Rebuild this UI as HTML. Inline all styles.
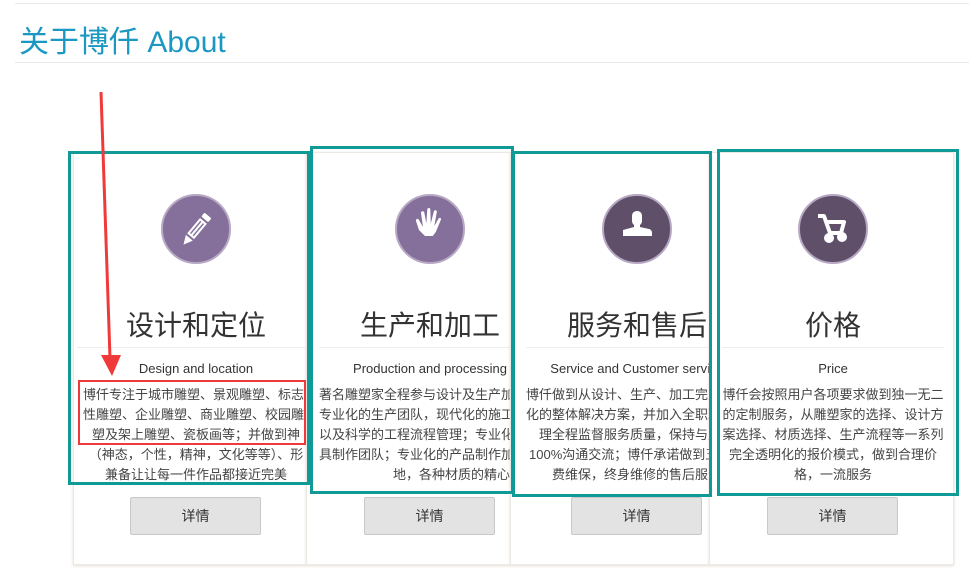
<!DOCTYPE html>
<html><head><meta charset="utf-8"><style>
*{margin:0;padding:0;box-sizing:border-box}
body{width:969px;height:584px;background:#fff;position:relative;overflow:hidden;font-family:"Liberation Sans","Noto Sans CJK SC",sans-serif;color:#333}
.abs{position:absolute}
.hl{position:absolute;left:15px;right:0;height:1px;background:#e8e8e8}
h1{position:absolute;left:19px;top:17px;font-size:30px;font-weight:normal;color:#1a98c2}
.card{position:absolute;top:152px;height:413px;background:#fff;border:1px solid #ece8e4;box-shadow:0 1px 3px #e5ded6;overflow:hidden}
.in{position:absolute;top:0;text-align:center}
.circ{position:absolute;top:41px;width:70px;height:70px;border-radius:50%;border:2px solid #b7a8c4}
.t{position:absolute;top:151px;left:0;right:0;font-size:28px;color:#333;white-space:nowrap}
.hr{position:absolute;top:194px;left:0;right:0;height:1px;background:#eee}
.en{position:absolute;top:208px;left:0;right:0;font-size:13px;color:#333;white-space:nowrap}
.p{position:absolute;top:232px;left:0;right:0;font-size:13px;line-height:20px;color:#444;white-space:nowrap}
.btn{position:absolute;top:344px;width:131px;height:38px;background:#e3e3e3;border:1px solid #c8c8c8;border-radius:2px;font-size:14px;line-height:36px;text-align:center;color:#333}
.box{position:absolute;border:3px solid #0f9a98}
</style></head><body>
<div class="hl" style="top:3px"></div>
<h1>关于博仟 About</h1>
<div class="hl" style="top:62px"></div>

<div class="card" style="left:73px;width:234px">
 <div class="in" style="left:9px;width:226px">
  <div class="circ" style="left:78px;background:#84709a"><svg width="66" height="66" viewBox="0 0 66 66"><g transform="rotate(40 33 33)" fill="#fff"><rect x="29" y="15" width="9" height="5" rx="1"/><path d="M29 22h9v20h-9z M31 24v16h1.5V24z M34.5 24v16H36V24z" fill-rule="evenodd"/><path d="M29 44h9l-4.5 9z"/></g></svg></div>
  <div class="t">设计和定位</div><div class="hr" style="left:-6px"></div>
  <div class="en">Design and location</div>
  <div class="p">博仟专注于城市雕塑、景观雕塑、标志性雕塑<br>性雕塑、企业雕塑、商业雕塑、校园雕塑<br>塑及架上雕塑、瓷板画等；并做到神<br>（神态，个性，精神，文化等等）、形<br>兼备让让每一件作品都接近完美</div>
  <div class="btn" style="left:47px">详情</div>
 </div>
</div>
<div class="card" style="left:306px;width:205px">
 <div class="in" style="left:12px;width:222px">
  <div class="circ" style="left:76px;background:#84709a"><svg width="66" height="66" viewBox="0 0 66 66" fill="#fff"><path d="M22 34l-3-9c-.5-2 2-3 3-1l4 7 -2-14c-.3-2 3-2.5 3.3-.5l2 11 1-14c0-2 3-2 3 0l.5 14 3-12c.5-2 3.5-1.5 3 .5l-2.5 14 4-7c1-2 3.5-1 2.5 1l-5 12-3 4H28z"/></svg></div>
  <div class="t">生产和加工</div><div class="hr"></div>
  <div class="en">Production and processing</div>
  <div class="p" style="text-align:left">著名雕塑家全程参与设计及生产加工<br>专业化的生产团队，现代化的施工<br>以及科学的工程流程管理；专业化<br>具制作团队；专业化的产品制作加<br><span style="padding-left:74px">地，各种材质的精心筛选</span></div>
  <div class="btn" style="left:45px">详情</div>
 </div>
</div>
<div class="card" style="left:510px;width:200px">
 <div class="in" style="left:15px;width:222px">
  <div class="circ" style="left:76px;background:#5f4f69"><svg width="66" height="66" viewBox="0 0 66 66" fill="#fff"><path d="M28 20c0-3 2-5 5-5s5 2 5 5v5c0 2-1 3-2 4v2l9 2c2 .5 3 2 3 4v3H19v-6l11-3v-2c-1-1-2-2-2-4z"/></svg></div>
  <div class="t">服务和售后</div><div class="hr"></div>
  <div class="en">Service and Customer service</div>
  <div class="p" style="text-align:left">博仟做到从设计、生产、加工完成<br>化的整体解决方案，并加入全职理<br><span style="padding-left:13px">理全程监督服务质量，保持与用户</span><br><span style="padding-left:3px">100%沟通交流；博仟承诺做到五</span><br><span style="padding-left:26px">费维保，终身维修的售后服务</span></div>
  <div class="btn" style="left:45px">详情</div>
 </div>
</div>
<div class="card" style="left:709px;width:245px">
 <div class="in" style="left:12px;width:222px">
  <div class="circ" style="left:76px;background:#5f4f69"><svg width="66" height="66" viewBox="0 0 66 66" fill="none" stroke="#fff" stroke-width="4" stroke-linejoin="round"><path d="M18 20h6l6 17h11l3-11H27"/><circle cx="29" cy="42" r="3" fill="#fff"/><circle cx="42" cy="41" r="3" fill="#fff"/></svg></div>
  <div class="t">价格</div><div class="hr"></div>
  <div class="en">Price</div>
  <div class="p">博仟会按照用户各项要求做到独一无二<br>的定制服务，从雕塑家的选择、设计方<br>案选择、材质选择、生产流程等一系列<br>完全透明化的报价模式，做到合理价<br>格，一流服务</div>
  <div class="btn" style="left:45px">详情</div>
 </div>
</div>

<div class="box" style="left:68px;top:151px;width:242px;height:334px"></div>
<div class="box" style="left:310px;top:146px;width:204px;height:348px"></div>
<div class="box" style="left:512px;top:151px;width:200px;height:346px"></div>
<div class="box" style="left:717px;top:149px;width:242px;height:347px"></div>
<div class="abs" style="left:78px;top:380px;width:228px;height:65px;border:2px solid #f03a3a"></div>
<svg class="abs" style="left:0;top:0" width="969" height="584"><line x1="101" y1="92" x2="110" y2="358" stroke="#f03a3a" stroke-width="3"/><path d="M101 355 L121 355 L112 376 Z" fill="#f03a3a"/></svg>
</body></html>
